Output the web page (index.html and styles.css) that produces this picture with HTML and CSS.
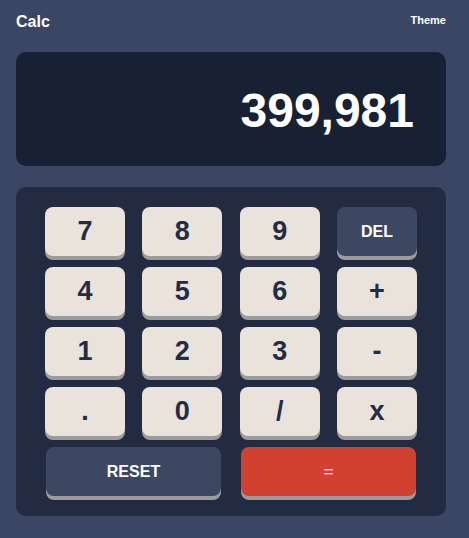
FILE: index.html
```html
<!DOCTYPE html>
<html lang="en">
<head>
<meta charset="utf-8">
<title>Calc</title>
<link rel="stylesheet" href="styles.css">
</head>
<body>
<main class="calc">
  <header class="top">
    <h1 class="title">Calc</h1>
    <span class="theme">Theme</span>
  </header>
  <section class="screen">
    <output class="value">399,981</output>
  </section>
  <section class="keypad">
    <button class="key">7</button>
    <button class="key">8</button>
    <button class="key">9</button>
    <button class="key key-dark">DEL</button>
    <button class="key">4</button>
    <button class="key">5</button>
    <button class="key">6</button>
    <button class="key">+</button>
    <button class="key">1</button>
    <button class="key">2</button>
    <button class="key">3</button>
    <button class="key">-</button>
    <button class="key">.</button>
    <button class="key">0</button>
    <button class="key">/</button>
    <button class="key">x</button>
    <div class="bottom-row">
      <button class="key key-dark key-wide">RESET</button>
      <button class="key key-equals key-wide">=</button>
    </div>
  </section>
</main>
</body>
</html>
```

FILE: styles.css
```css
* {
  box-sizing: border-box;
}

html, body {
  margin: 0;
  padding: 0;
  background: #3b4664;
}

body {
  font-family: "Liberation Sans", Arial, sans-serif;
  color: #ffffff;
}

.calc {
  padding: 13px 23px 0 16px;
  width: 469px;
}

.top {
  display: flex;
  justify-content: space-between;
  align-items: flex-start;
  height: 18px;
}

.title {
  margin: 0;
  font-size: 16px;
  line-height: 18px;
  font-weight: 700;
}

.theme {
  font-size: 11px;
  line-height: 13px;
  font-weight: 700;
  padding-top: 1px;
}

.screen {
  margin-top: 21px;
  height: 114px;
  background: #182033;
  border-radius: 10px;
  display: flex;
  align-items: center;
  justify-content: flex-end;
  padding: 3px 32px 0 0;
}

.value {
  font-size: 48px;
  line-height: 58px;
  font-weight: 700;
  color: #ffffff;
}

.keypad {
  margin-top: 21px;
  background: #232b43;
  border-radius: 10px;
  padding: 20px 29px 20px 29px;
  display: grid;
  grid-template-columns: repeat(4, 80px);
  justify-content: space-between;
  row-gap: 11px;
}

.key {
  height: 49px;
  border: none;
  border-radius: 8px;
  background: #eae3dc;
  box-shadow: 0 4px 0 #9d9b9c;
  color: #232c43;
  font-family: "Liberation Sans", Arial, sans-serif;
  font-size: 27px;
  font-weight: 700;
  padding: 0;
  cursor: pointer;
}

.key-dark {
  background: #3e4762;
  color: #ffffff;
  font-size: 16px;
}

.bottom-row {
  grid-column: 1 / -1;
  display: grid;
  grid-template-columns: 1fr 1fr;
  column-gap: 20px;
  padding: 0 1px;
}

.key-wide {
  height: 49px;
}

.key-equals {
  background: #d14130;
  color: #ffffff;
  font-size: 17px;
  font-weight: 400;
}
```
